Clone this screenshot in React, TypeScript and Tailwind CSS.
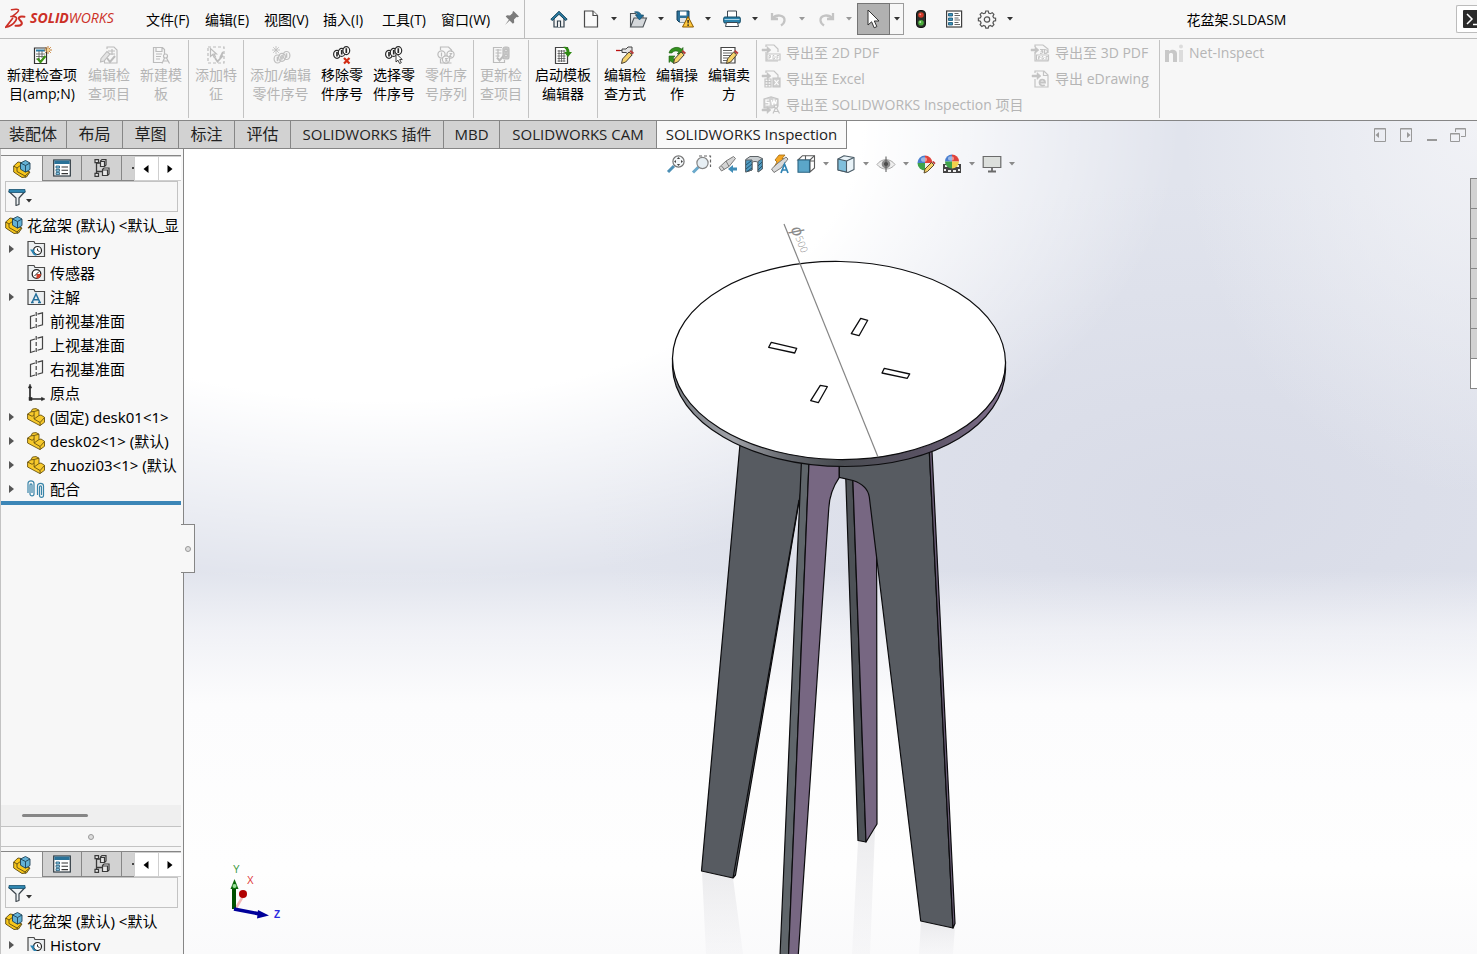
import React from 'react';
import clsx from 'clsx';

const icons: Record<string, React.ReactNode> = {
  home: (
    <g stroke="#2f3e4a" strokeWidth="1.2" fill="none">
      <path d="M4 8v9h10V8" fill="#f4f4f4" />
      <path d="M7.5 17v-6h3v6" fill="#fff" />
      <path d="M.8 9.3 9 1.3l8.2 8-1.6 1.1L9 4.3l-6.600 6.100z" fill="#2b7da3" stroke="#14435c" strokeWidth="1" />
    </g>
  ),
  newDoc: (
    <g fill="#fafafa" stroke="#4a4a4a" strokeWidth="1.2">
      <path d="M2.500 1h8.500l4.500 4.500V17h-13z" />
      <path d="M11 1v4.500h4.500" />
    </g>
  ),
  open: (
    <g stroke="#4c5257" strokeWidth="1.1">
      <path d="M1.500 17V3.500h5l1.500 2h6V8" fill="#e4e6e8" />
      <path d="M1.500 17 5 8h12.500L14 17z" fill="#d5d8db" />
      <path d="M5.500 2c3.500-1 6 .5 6.500 3h2.500l-4 5-4-5h2.300C8.500 3.500 7.500 2.600 5.500 2z" fill="#1f6f9c" stroke="#14506f" strokeWidth=".7" />
    </g>
  ),
  save: (
    <g>
      <path d="M1 1h12v11H3l-2-2z" fill="#2c7199" stroke="#123f5a" />
      <path d="M4 1.500h6.500v4H4z" fill="#fff" />
      <path d="M4 8h6v4H4z" fill="#e4e4e4" />
      <path d="m12 6.500 5.500 10.500h-11z" fill="#ffc83d" stroke="#8a5a00" strokeLinejoin="round" />
      <path d="M11.300 10h1.600l-.3 3.500h-1z" fill="#222" />
      <circle cx="12.100" cy="15.100" r=".9" fill="#222" />
    </g>
  ),
  print: (
    <g stroke="#3b4650">
      <path d="M4.500 7V1h9v6" fill="#fff" />
      <rect x=".7" y="7" width="16.600" height="6" rx="1.200" fill="#2b82ab" stroke="#154b66" />
      <path d="M1.500 9.500h15" stroke="#a6d3e8" />
      <path d="M3.500 12.500h11l1 4h-13z" fill="#fff" />
    </g>
  ),
  undo: <path d="M2 3v6h6M2.500 8.500C6 4 15 4.500 14.500 10.500c-.2 2.500-2 4-3.500 5" fill="none" stroke="#c4c4c4" strokeWidth="2.300" />,
  redo: <path d="M16 3v6h-6M15.500 8.500C12 4 3 4.500 3.500 10.500c.2 2.500 2 4 3.500 5" fill="none" stroke="#c4c4c4" strokeWidth="2.300" />,
  cursor: <path d="M3 0v15l3.600-3.200 2.600 6 2.700-1.200-2.600-5.600H14z" fill="#fff" stroke="#333" strokeWidth="1" />,
  traffic: (
    <g>
      <rect x="4.500" y=".5" width="9" height="17" rx="3.500" fill="#2a2f2a" stroke="#111" />
      <circle cx="9" cy="5" r="2.800" fill="#d23a2a" />
      <circle cx="9" cy="12.700" r="2.800" fill="#4cae3c" />
      <circle cx="8.300" cy="4.300" r=".9" fill="#f2a197" />
      <circle cx="8.300" cy="12" r=".9" fill="#c3efb7" />
    </g>
  ),
  options: (
    <g>
      <rect x="1.600" y="1" width="15" height="16" fill="#fff" stroke="#3f3f3f" strokeWidth="1.200" />
      <path d="M3.500 3.500h4v2.500h-4zM3.500 8h4v2.500h-4zM3.500 12.500h4V15h-4z" fill="#3c93bd" stroke="#15506e" strokeWidth=".8" />
      <path d="M9.500 3.500h4M9.500 5.500h5.500M9.500 8h4M9.500 10h5.500M9.500 12.500h4M9.500 14.500h5.500" stroke="#555" strokeWidth=".9" />
    </g>
  ),
  gear: (
    <g fill="none" stroke="#555">
      <path d="m7.800 1 2.400 0 .5 2 1.700.7 1.800-1 1.700 1.700-1 1.800.7 1.600 2 .5v2.400l-2 .5-.7 1.700 1 1.800-1.700 1.700-1.800-1-1.700.7-.5 2H7.800l-.5-2-1.700-.7-1.800 1-1.700-1.700 1-1.800-.7-1.700-2-.5V8.300l2-.5.7-1.600-1-1.800 1.700-1.700 1.800 1L7.300 3z" strokeWidth="1.200" />
      <circle cx="9" cy="9.500" r="2.700" strokeWidth="1.200" />
    </g>
  ),
  newInspect: (
    <g>
      <path d="M1.500 2h12v15.500h-12z" fill="#fff" stroke="#333" strokeWidth="1.200" />
      <path d="M3 3.500h9v2H3z" fill="#2a7ca5" />
      <path d="M3 8h9M3 10.500h9M3 13h4M6 5v9M9 5v7" stroke="#555" strokeWidth=".8" />
      <path d="m4.500 12.500 3 3.500 5-6" fill="none" stroke="#3c9216" strokeWidth="2.200" />
      <path d="M15 0v8M11 4h8M12.200 1.200l5.600 5.600M17.800 1.200l-5.600 5.600" stroke="#c07422" strokeWidth=".9" />
      <circle cx="15" cy="4" r="1.500" fill="#f7d28b" />
    </g>
  ),
  editInspect: (
    <g fill="none" stroke="#bcbcbc" strokeWidth="1.100">
      <path d="M7 3V1h7l3 3v13H4.500v-3" />
      <path d="M8 5h7M10 8h5M12 3v6" />
      <path d="m7 12 3 4 5-6" strokeWidth="2" />
      <path d="M1 12.500 7 5.500l3 2.500-6 7-3.500 1z" fill="#e4e4e4" />
    </g>
  ),
  template: (
    <g fill="none" stroke="#bcbcbc" strokeWidth="1.200">
      <path d="M10 16.500H1.500V1.500h9l2 2v5M4 1.500v4h6v-4M4 8h6M4 10.500h5M4 13h4" />
      <circle cx="13.500" cy="10" r="2" />
      <path d="M12.500 12 10 17.500M14.500 12l3 5.500M11.500 15h4.500" />
    </g>
  ),
  feature: (
    <g fill="none" stroke="#bcbcbc" strokeWidth="1.200">
      <rect x="1" y="1" width="16" height="16" strokeDasharray="3 2" />
      <path d="M3.500 2.500v8l2.200-2 1.500 3 1.300-.6L7 8h2.500z" fill="#f7f7f7" />
      <path d="m8 12 2.500 3.500L16 9.500M13 12l3-6" strokeWidth="1.800" />
    </g>
  ),
  addBalloon: (
    <g fill="none" stroke="#c0c0c0" strokeWidth="1.200">
      <path d="M4 0v8M0 4h8M1.200 1.200l5.600 5.600M6.800 1.200 1.200 6.800" strokeWidth=".9" />
      <ellipse cx="5.500" cy="13" rx="3.400" ry="4" />
      <ellipse cx="10" cy="11.300" rx="3.400" ry="4" />
      <ellipse cx="14.500" cy="9.500" rx="3.400" ry="4" />
      <path d="M5.500 10.800v4.400M10 9v4.400M14.500 7.300v4.400" strokeWidth="1.600" />
    </g>
  ),
  removeBalloon: (
    <g fill="#fff" stroke="#2a2a2a" strokeWidth="1.200">
      <ellipse cx="4" cy="8.300" rx="3.400" ry="4" />
      <ellipse cx="8.700" cy="6.400" rx="3.400" ry="4" />
      <ellipse cx="13.300" cy="4.600" rx="3.400" ry="4" />
      <path d="M4 6v4.600M8.700 4v4.600M13.300 2.300v4.600" strokeWidth="1.700" />
      <path d="m11 12 5.500 5.500M16.500 12 11 17.500" stroke="#d22b12" strokeWidth="2.200" />
    </g>
  ),
  selectBalloon: (
    <g fill="#fff" stroke="#2a2a2a" strokeWidth="1.200">
      <ellipse cx="4" cy="8.300" rx="3.400" ry="4" />
      <ellipse cx="8.700" cy="6.400" rx="3.400" ry="4" />
      <ellipse cx="13.300" cy="4.600" rx="3.400" ry="4" />
      <path d="M4 6v4.600M8.700 4v4.600M13.300 2.300v4.600" strokeWidth="1.700" />
      <path d="M11 7.500V16l2-1.800 1.600 3.300 1.700-.8-1.600-3.200h2.600z" strokeWidth=".9" />
    </g>
  ),
  balloonList: (
    <g fill="none" stroke="#bcbcbc" strokeWidth="1.200">
      <path d="M3.500 4V1h8l3 3v2M3.500 13v4h11" />
      <circle cx="4.500" cy="8.500" r="3.600" />
      <circle cx="13.500" cy="8.500" r="3.600" />
      <circle cx="9" cy="13.500" r="3.600" fill="#f7f7f7" />
      <path d="M4.500 6.500v4M12.500 7.500h2l-2 3h2M8 12.500h2l-1 1 1 1.500H8" />
    </g>
  ),
  update: (
    <g fill="none" stroke="#bcbcbc" strokeWidth="1.200">
      <path d="M10 1.500H1.500v15h11V14M3.500 4h6M3.500 7h6M3.500 10h4M6 3v8" />
      <path d="m5 11.500 2.500 3 4-4.500" strokeWidth="2" />
      <rect x="11" y="1" width="6" height="12" rx="2" fill="#c9c9c9" />
      <circle cx="14" cy="4.500" r="1.300" fill="#f2f2f2" />
      <circle cx="14" cy="9.500" r="1.300" fill="#f2f2f2" />
    </g>
  ),
  launch: (
    <g>
      <path d="M1.500 1.500h12v16h-12z" fill="#fff" stroke="#444" strokeWidth="1.200" />
      <path d="M3.500 5h8M3.500 7.500h8M3.500 10h8M3.500 12.500h8M3.500 15h8M5 4v12M7.500 4v12M10 4v12" stroke="#555" strokeWidth=".8" />
      <path d="M9 1c4-1 6.500 1 6.500 5h2.500l-4 5-4-5h2.500c0-2-1-3.500-3.500-5z" fill="#2f8a12" />
    </g>
  ),
  method: (
    <g>
      <path d="M0 4.500h6M6 3h4l2-2h4v7h-4l-2-1.500H6z" fill="#e3e3e3" stroke="#444" />
      <path d="M0 4.500h4" stroke="#b11" strokeWidth="1.300" />
      <path d="m5.500 17.500 1-4.500L13 6l3.200 2.800-6.500 7.200z" fill="#f6d36b" stroke="#4b4030" />
      <path d="m13.500 5.500 1.300-1.500 3.200 2.800-1.300 1.500z" fill="#b93a3a" />
    </g>
  ),
  operation: (
    <g>
      <path d="M1 7c1-5 8-7.500 12.500-4L15 1.500V8H9l2-2C8 4 5.500 5 4 7zM1 10h6l-2 2.300c1 .8 1.500 1 2.500 1.200L6 17c-1.500-.2-2.500-1-3.300-2L1 16.500z" fill="#348f20" stroke="#1f5f12" strokeWidth=".6" />
      <path d="m5.500 17.500 1-4.500L13 6l3.200 2.800-6.500 7.200z" fill="#f6d36b" stroke="#4b4030" />
      <path d="m13.500 5.500 1.300-1.500 3.200 2.800-1.300 1.500z" fill="#b93a3a" />
    </g>
  ),
  vendor: (
    <g>
      <path d="M1 1.500h14v15.500H1z" fill="#fff" stroke="#444" strokeWidth="1.200" />
      <path d="M3 4.500h9M3 7h9M3 9.500h7M3 12h5M3 14.500h4" stroke="#555" strokeWidth=".9" />
      <path d="m6.500 17.500 1-4.500 6-7 3.200 2.800-6 7.200z" fill="#f6d36b" stroke="#4b4030" />
      <path d="m14 5.500 1.300-1.500 3.200 2.800-1.300 1.500z" fill="#b93a3a" />
    </g>
  ),
  exportPdf: (
    <g fill="none" stroke="#c4c4c4" strokeWidth="1.200">
      <path d="M4 3V1h8l4 4v3M4 8v9h12" />
      <path d="M0 5h5V2.500L9 6 5 9.500V7H0z" fill="#c4c4c4" strokeWidth=".5" />
      <path d="M5 10h13v6H5z" fill="#fff" />
      <path d="M7 15v-3.500h1.500v2H7M11 15v-3.500h1l1 1v1.500l-1 1zM15 15v-3.500h2M15 13.200h1.500" strokeWidth=".9" />
    </g>
  ),
  exportPdf3d: (
    <g fill="none" stroke="#c4c4c4" strokeWidth="1.200">
      <path d="M4 3V1h8l5 4v4M4 8v9h13v-1" />
      <path d="M0 5h4V2.500L8 6 4 9.500V7H0z" fill="#c4c4c4" strokeWidth=".5" />
      <path d="M9 5.500h3L10.500 7.200c2 0 2 2.300-1.500 2.100M13.500 5.500v4c4 0 4-4 0-4z" />
      <path d="M5.500 11h12v5h-12z" fill="#fff" />
      <path d="M7.500 15.500v-3H9v1.500H7.500M11 15v-2.500h1l1 1v.5l-1 1zM15 15.500v-3h2M15 14h1.500" strokeWidth=".9" />
    </g>
  ),
  exportExcel: (
    <g fill="none" stroke="#c4c4c4" strokeWidth="1.200">
      <path d="M4 3V1h8l4 4v3M3 9h6v8H3zM3 11.600h6M3 14.300h6M6 9v8" />
      <path d="M0 5h5V2.500L9 6 5 9.500V7H0z" fill="#c4c4c4" strokeWidth=".5" />
      <path d="M11 8h7v9h-7z" fill="#d0d0d0" />
      <path d="m12.500 10 4 5M16.500 10l-4 5" stroke="#fff" />
    </g>
  ),
  exportProject: (
    <g fill="none" stroke="#c4c4c4" strokeWidth="1.200">
      <path d="M2 3 9 .8 16 3v7l-6 2H2z" fill="#d2d2d2" />
      <path d="M7 4H4v2.500h3V9H3.500M9.500 4l1 5 1.500-5 1.500 5 1-5" stroke="#fff" />
      <path d="M0 13h5v-2.500l4 3.500-4 3.500V15H0z" fill="#c4c4c4" strokeWidth=".5" />
      <circle cx="14" cy="10.500" r="1.600" fill="#f7f7f7" />
      <path d="m13.500 12-2.500 5.500M14.500 12l3 5.500M12 15.500h4" />
    </g>
  ),
  exportDrawing: (
    <g fill="none" stroke="#c4c4c4" strokeWidth="1.200">
      <path d="M4 3V1h9l4 4v12H4V9M12.500 1v4.500H17" />
      <path d="M1 5h5V2.500L10 6 6 9.500V7H1z" fill="#c4c4c4" strokeWidth=".5" />
      <path d="M8 12.500h6c0-4-5.500-4-5.500.3 0 3 3.500 3.500 5.200 2" strokeWidth="1.800" />
    </g>
  ),
  netInspect: (
    <g fill="#c8c8c8">
      <path d="M0 6h4v1.200C6 5 12 5 12 9.500V18H8v-7.500c0-2-4-2-4 0V18H0z" />
      <path d="M14 6h4v12h-4z" fill="#dcdcdc" />
      <circle cx="16" cy="2.500" r="2" fill="#dcdcdc" />
    </g>
  ),
  assembly: (
    <g stroke="#5a4a12" strokeWidth=".9" strokeLinejoin="round">
      <path d="M.7 6 5 2l3 .5V9l9 3-3.500 5L9 17.500.7 12z" fill="#f7c61c" />
      <path d="M.7 6 4 8v3.500l8 4.500.5 1.500M4 8l4-3M12 16l4.500-4" fill="none" />
      <path d="m7.500 3 5-2.500L17 3v6.500l-4.500 2.700-5-3z" fill="#63b1d6" stroke="#1d4257" />
      <path d="m7.500 3 5 2.500L17 3M12.500 5.500V12" fill="none" stroke="#1d4257" />
    </g>
  ),
  property: (
    <g>
      <rect x=".7" y="1" width="16.600" height="16" fill="#fff" stroke="#2f3a42" strokeWidth="1.200" />
      <path d="M1.300 1.500h15.400V5H1.300z" fill="#2a7298" />
      <path d="M3 7h3.500v2H3zM3 10.300h3.500v2H3zM3 13.600h3.500v2H3z" fill="#8fd0ee" stroke="#1d5673" strokeWidth=".8" />
      <path d="M8.500 8H15M8.500 11.300H15M8.500 14.600H15" stroke="#333" strokeWidth="1.100" />
    </g>
  ),
  config: (
    <g fill="#e8e8e8" stroke="#3a3a3a" strokeWidth="1.200">
      <path d="M3.500 2v14M3.500 4H8M3.500 12.500H9" fill="none" strokeWidth="1.300" />
      <path d="M2 .6h3.500v3H2zM2 14.400h3.500v3H2z" />
      <path d="M7.500 2 9 .6h4V6l-1.500 1.500h-4zM9.500 10.500 11 9h5v6l-1.500 1.500h-5z" />
      <path d="M7.500 2.500h4v5M9.500 11h5v5.500" fill="none" />
    </g>
  ),
  filter: (
    <g stroke="#3b444b" strokeLinejoin="round">
      <path d="M1 3.500h16L11 10v6.500l-3 1V10z" fill="#eef2f4" strokeWidth="1.200" />
      <path d="M1 1.500h16v3H1z" fill="#2f86b0" stroke="#175170" strokeWidth=".8" />
    </g>
  ),
  history: (
    <g>
      <path d="M1 16.500V1.500h6l1 2h9.500v13z" fill="#eceff1" stroke="#4a4a4a" strokeWidth="1.200" />
      <circle cx="10.500" cy="10.500" r="4" fill="#fff" stroke="#222" strokeWidth="1.200" />
      <path d="M10.500 8.500v2l2 1" fill="none" stroke="#222" />
      <path d="M3 9.500h5L5.500 13z" fill="#2b84b3" />
      <path d="M5.500 11c.5 2.500 2 3.700 4 4" fill="none" stroke="#2b84b3" strokeWidth="1.500" />
    </g>
  ),
  sensor: (
    <g>
      <path d="M1 16.500V1.500h6l1 2h9.500v13z" fill="#eceff1" stroke="#4a4a4a" strokeWidth="1.200" />
      <circle cx="9.500" cy="10" r="4.300" fill="#fff" stroke="#222" strokeWidth="1.300" />
      <path d="M9.500 10H14a4.500 4.500 0 0 1-4.500 4.500z" fill="#d1402a" />
      <path d="m7.500 12 4.500-4.500" stroke="#222" />
    </g>
  ),
  annotation: (
    <g>
      <path d="M1 16.500V1.500h6l1 2h9.500v13z" fill="#eceff1" stroke="#4a4a4a" strokeWidth="1.200" />
      <path d="M5 14.500 9 6l4 8.500M6.500 11.800h5M4 14.600h2.700M11 14.600h3" fill="none" stroke="#236f9c" strokeWidth="1.500" />
    </g>
  ),
  plane: (
    <g fill="none" stroke="#444" strokeWidth="1.200">
      <path d="M8 3 3.500 4.500v12L8 15M10.500 2.200 15.500.8v12l-5 1.500" />
      <path d="M9.200 0v18" strokeDasharray="4 2" />
    </g>
  ),
  origin: (
    <g stroke="#2a2a2a" strokeWidth="1.700" fill="#2a2a2a">
      <path d="M3 2v13h13" fill="none" />
      <path d="M3 0 1.300 4h3.400zM18 15l-3.500-1.700v3.400z" strokeWidth=".5" />
      <rect x="2" y="13.500" width="3" height="3" strokeWidth=".5" />
    </g>
  ),
  part: (
    <g stroke="#6a5310" strokeWidth=".9" strokeLinejoin="round">
      <path d="M.6 6 4 3.800 5.500 1 9 .6l3 1.600v5.300L14 7l3.500 2.300v5L13 17.600.6 11z" fill="#f7c92b" />
      <path d="m.6 6 4.500 2.300 2-1.500V3.500L4 3.800M7.100 3.500 12 2.200M7.100 6.800V11l6 3.500v3M13.100 14.500l4.400-5M7.100 11 12 7.500" fill="none" />
    </g>
  ),
  mates: (
    <g fill="none" stroke="#3984a8" strokeWidth="1.200">
      <path d="M1 13V3.500c0-3.500 6-3.500 6 0V14c0 2.500-4 2.500-4 0V5c0-1.500 2-1.500 2 0v8" />
      <path d="M10.500 15V6c0-3.500 6-3.500 6 0v9.500c0 2.500-4 2.500-4 0V7c0-1.500 2-1.500 2 0v8" />
    </g>
  ),
  zoomFit: (
    <g>
      <path d="m1 17 6-6" stroke="#4c8fb5" strokeWidth="3" />
      <circle cx="11.500" cy="6.500" r="5.600" fill="#f3f6f8" stroke="#757575" strokeWidth="1.200" />
      <path d="m11.500 2 1.600 2h-3.200zM11.500 11l1.600-2h-3.200zM7 6.500l2-1.600v3.200zM16 6.500l-2-1.600v3.200z" fill="#444" />
    </g>
  ),
  zoomArea: (
    <g>
      <path d="M6 1h11.500v11" fill="none" stroke="#666" strokeWidth="1.200" strokeDasharray="3 2" />
      <path d="m0 17.500 5.500-5.500" stroke="#6aa9cb" strokeWidth="3" />
      <circle cx="9.500" cy="8" r="5.600" fill="#e7eff4" stroke="#858585" strokeWidth="1.200" />
    </g>
  ),
  prevView: (
    <g>
      <path d="m0 12.500 2.500 3.500L10 11.500l6.500-8L14.500 1.500 7 6z" fill="#d4d4d4" stroke="#7a7a7a" />
      <path d="m7 6 3 5.500M2.500 11l3 3.500" stroke="#7a7a7a" />
      <path d="M18 12.500h-4V10l-5 4 5 4v-2.500h4z" fill="#3f8cb6" />
    </g>
  ),
  section: (
    <g stroke="#5d6367">
      <path d="M.7 4.500 5 1.500h8l4.300 2V14L13 17V8c0-2-6-2-6 0v7l-6.300 2z" fill="#c9ced1" />
      <path d="M.7 5H7v10l-6.300 2zM13 6.500l4.300-3V14L13 17z" fill="#4f9cc4" />
      <path d="m1 10 5-4M1 14l6-5M2 16.500 7 13M13 11l4-4M13 15l4-4" stroke="#22536e" />
    </g>
  ),
  dynamic: (
    <g>
      <path d="m4 5 4-5h6l-3 3.500h3L3 12l3-5z" fill="#f5a623" stroke="#a06a12" strokeWidth=".8" />
      <path d="m.5 14 2.500 3.500 7-4.500 7-9-2-2-8 6z" fill="#d9d9d9" stroke="#7a7a7a" />
      <path d="m10 18 3.500-9L17 18M11 15h5" fill="none" stroke="#2f83b3" strokeWidth="1.700" />
    </g>
  ),
  orient: (
    <g stroke="#5b5b5b" strokeWidth="1.100">
      <path d="m1 5 4.500-4.300H17.500V13L13 17V5z" fill="#fff" />
      <path d="M8.500.7v12.600M5.500 6h12M13 5l4.500-4.300" fill="none" />
      <path d="M1 5h11.500v12.300H1z" fill="#5ba6c9" stroke="#2d6482" />
    </g>
  ),
  display: (
    <g stroke="#4a5b66" strokeWidth="1.100" strokeLinejoin="round">
      <path d="M1 4 7 .8 17 2.500v12l-6 3L1 15z" fill="#e9f3f8" />
      <path d="M1 4 9.500 6v11L1 15z" fill="#7fbfdc" />
      <path d="M9.500 6 17 2.500" />
    </g>
  ),
  eye: (
    <g>
      <path d="M0 9.500C4.500 3 13.500 3 18 9.500 13.500 15.500 4.500 15.500 0 9.500z" fill="#eee" stroke="#aaa" />
      <circle cx="9" cy="9" r="4.300" fill="#8b8b8b" />
      <circle cx="9" cy="9" r="2" fill="#444" />
      <path d="M9 1.500v15.500" stroke="#555" />
    </g>
  ),
  appearance: (
    <g>
      <path d="M8 8V.5A7.500 7.500 0 0 0 .5 8z" fill="#4a7fd0" />
      <path d="M8 8V.5A7.500 7.500 0 0 1 15.500 8z" fill="#e0433c" />
      <path d="M8 8H.5A7.500 7.500 0 0 0 8 15.500z" fill="#3fa34a" />
      <path d="M8 8h7.500A7.500 7.500 0 0 1 8 15.500z" fill="#f0f0f0" />
      <ellipse cx="7" cy="4.500" rx="3" ry="2.300" fill="#fff" opacity=".45" />
      <path d="m7 18 1-4 6.500-6.500L17 10l-6.500 6.500z" fill="#f4d06a" stroke="#5a4a2a" />
      <path d="m15 7 1.500-1 2 2-1 1.500z" fill="#b93a3a" />
    </g>
  ),
  scene: (
    <g>
      <path d="M0 9h18v9H0z" fill="#444" />
      <path d="M2 10h3v2H2zM13 10h3v2h-3zM5 15h3v2H5zM10 15h3v2h-3zM1 14h2v2H1zM15 14h2v2h-2z" fill="#eee" />
      <path d="M9 6.500V-.500A7 7 0 0 0 2 6.500z" fill="#4a7fd0" />
      <path d="M9 6.500V-.500a7 7 0 0 1 7 7z" fill="#e0433c" />
      <path d="M9 6.500H2a7 7 0 0 0 7 7z" fill="#3fa34a" />
      <path d="M9 6.500h7a7 7 0 0 1-7 7z" fill="#f1d14c" />
      <ellipse cx="8" cy="3.500" rx="3" ry="2.200" fill="#fff" opacity=".45" />
    </g>
  ),
  monitor: (
    <g stroke="#6a6a6a" strokeWidth="1.200">
      <path d="M.2 1.500h17.600v11H.2z" fill="#dcdfdc" />
      <path d="M9 12.500V16M5 16.500h8" strokeWidth="1.800" />
    </g>
  ),
};

const Icon: React.FC<{ name: string; className?: string }> = ({ name, className }) => (
  <svg viewBox="0 0 18 18" className={clsx('shrink-0 overflow-visible', className ?? 'h-[18px] w-[18px]')} aria-hidden="true">
    {icons[name]}
  </svg>
);

const Caret: React.FC<{ className?: string }> = ({ className }) => (
  <svg viewBox="0 0 6 4" className={clsx('h-1 w-1.5', className)} aria-hidden="true">
    <path d="M0 0h6L3 3.500z" fill="currentColor" />
  </svg>
);

const menus = ['文件(F)', '编辑(E)', '视图(V)', '插入(I)', '工具(T)', '窗口(W)'];

const quickTools = [
  { icon: 'newDoc', label: '新建' },
  { icon: 'open', label: '打开' },
  { icon: 'save', label: '保存' },
  { icon: 'print', label: '打印' },
  { icon: 'undo', label: '撤消', disabled: true },
  { icon: 'redo', label: '重做', disabled: true },
];

const TitleBar: React.FC = () => (
  <header className="flex h-[39px] shrink-0 items-center border-b border-[#bdbdbd]">
    <div className="flex w-[140px] items-center pb-0.5 pl-[5px]">
      <svg viewBox="0 0 21 21" className="h-[21px] w-[21px]" fill="none" stroke="#cc2f26" strokeLinecap="round" aria-hidden="true">
        <path d="M6.500 1.800C10 .8 14 .8 13.500 2.800 13 4.500 10 6 8 7.800" strokeWidth="1.500" />
        <path d="M6 8.500c4.500-.8 7 1 4.500 4.500C8.500 16 4.500 18.500.8 19.200L7.500 10.500" strokeWidth="1.700" />
        <path d="M19.500 8.800c-5.500-1-7 1-4.500 3.400 3.500 3.200 2 6-4.500 5.600" strokeWidth="2" />
      </svg>
      <span className="ml-1 font-['Open_Sans'] text-sm leading-5 text-[#cc2f26] italic">
        <b>SOLID</b>
        <span>WORKS</span>
      </span>
    </div>
    <nav className="flex items-center pt-0.5 pl-1.5 text-sm">
      {menus.map((menu) => (
        <button key={menu} className="w-[59px] text-left whitespace-nowrap">{menu}</button>
      ))}
      <button aria-label="固定菜单" className="flex w-[24px] justify-end pr-1 pb-1">
        <svg viewBox="0 0 16 16" className="h-4 w-4" aria-hidden="true">
          <path d="m9.500 1 5.500 5.500-1.500.7-1-.3-2.500 2.600.2 3-1.300 1.200-3.300-3.300L1 15l3.900-5.300L1.700 6.500 3 5.300l3 .2L8.700 3l-.3-1z" fill="#7b7b7b" />
        </svg>
      </button>
    </nav>
    <div className="flex h-full items-center border-l border-[#bdbdbd] pl-[18px] text-[#333]">
      <div className="flex items-center gap-0.5">
        <button aria-label="主页" className="flex w-8 justify-center"><Icon name="home" /></button>
        {quickTools.map((tool) => (
          <div key={tool.icon} className={clsx('flex items-center', tool.disabled && 'text-[#999]')}>
            <button aria-label={tool.label} disabled={tool.disabled} className="flex w-7 justify-center"><Icon name={tool.icon} /></button>
            <button aria-label={`${tool.label}选项`} className="flex h-5 w-[17px] items-center justify-center"><Caret /></button>
          </div>
        ))}
      </div>
      <button aria-label="选择" className="flex h-8 w-[33px] items-center justify-center border border-[#757575] bg-[#b1b1b1]"><Icon name="cursor" /></button>
      <button aria-label="选择选项" className="flex h-8 w-3.5 items-center justify-center border border-l-0 border-[#9b9b9b]"><Caret /></button>
      <button aria-label="重建模型" className="flex w-[33px] justify-center"><Icon name="traffic" /></button>
      <button aria-label="文件属性" className="flex w-[33px] justify-center"><Icon name="options" /></button>
      <button aria-label="选项" className="flex w-[33px] justify-center"><Icon name="gear" /></button>
      <button aria-label="更多选项" className="flex h-5 w-3.5 items-center justify-center"><Caret /></button>
    </div>
    <h1 className="flex-1 pt-0.5 text-center text-sm whitespace-nowrap">花盆架.SLDASM</h1>
    <button aria-label="搜索命令" className="flex h-7 w-[21px] items-center overflow-hidden rounded-l-xs border border-r-0 border-[#bcbcbc] bg-white pl-1.5">
      <svg viewBox="0 0 18 18" className="h-[18px] w-[18px] shrink-0" aria-hidden="true">
        <rect width="18" height="18" rx="1" fill="#2b2b2b" />
        <path d="m4 4 5 5-5 5M10 14.500h7" fill="none" stroke="#fff" strokeWidth="1.500" />
      </svg>
    </button>
  </header>
);

interface Command {
  icon: string;
  lines: string[];
  width: string;
  disabled?: boolean;
}

const commandGroups: Command[][] = [
  [
    { icon: 'newInspect', lines: ['新建检查项', '目(amp;N)'], width: 'w-[82px]' },
    { icon: 'editInspect', lines: ['编辑检', '查项目'], width: 'w-[52px]', disabled: true },
    { icon: 'template', lines: ['新建模', '板'], width: 'w-[52px]', disabled: true },
  ],
  [{ icon: 'feature', lines: ['添加特', '征'], width: 'w-[52px]', disabled: true }],
  [
    { icon: 'addBalloon', lines: ['添加/编辑', '零件序号'], width: 'w-[71px]', disabled: true },
    { icon: 'removeBalloon', lines: ['移除零', '件序号'], width: 'w-[52px]' },
    { icon: 'selectBalloon', lines: ['选择零', '件序号'], width: 'w-[52px]' },
    { icon: 'balloonList', lines: ['零件序', '号序列'], width: 'w-[52px]', disabled: true },
  ],
  [{ icon: 'update', lines: ['更新检', '查项目'], width: 'w-[52px]', disabled: true }],
  [{ icon: 'launch', lines: ['启动模板', '编辑器'], width: 'w-[66px]' }],
  [
    { icon: 'method', lines: ['编辑检', '查方式'], width: 'w-[52px]' },
    { icon: 'operation', lines: ['编辑操', '作'], width: 'w-[52px]' },
    { icon: 'vendor', lines: ['编辑卖', '方'], width: 'w-[52px]' },
  ],
];

const exportGroups = [
  {
    width: 'w-[269px]',
    items: [
      { icon: 'exportPdf', label: '导出至 2D PDF' },
      { icon: 'exportExcel', label: '导出至 Excel' },
      { icon: 'exportProject', label: '导出至 SOLIDWORKS Inspection 项目' },
    ],
  },
  {
    width: 'w-[134px] border-r',
    items: [
      { icon: 'exportPdf3d', label: '导出至 3D PDF' },
      { icon: 'exportDrawing', label: '导出 eDrawing' },
    ],
  },
  { width: 'w-[120px]', items: [{ icon: 'netInspect', label: 'Net-Inspect' }] },
];

const Ribbon: React.FC = () => (
  <div className="flex h-[82px] shrink-0 items-start border-b border-[#868686] pt-px text-sm">
    {commandGroups.map((group, index) => (
      <div key={index} className="flex h-[78px] shrink-0 border-r border-[#c3c3c3] px-px">
        {group.map((command) => (
          <button
            key={command.icon}
            disabled={command.disabled}
            className={clsx('flex flex-col items-center pt-1.5 leading-[19px] whitespace-nowrap', command.width, command.disabled && 'text-[#b5b5b5]')}
          >
            <Icon name={command.icon} />
            <span className="mt-px">{command.lines[0]}</span>
            <span>{command.lines[1]}</span>
          </button>
        ))}
      </div>
    ))}
    {exportGroups.map((group) => (
      <div key={group.width} className={clsx('flex h-[78px] shrink-0 flex-col border-[#c3c3c3] pl-[5px]', group.width)}>
        {group.items.map((item) => (
          <button key={item.label} disabled className="flex h-[26px] items-center gap-1.5 whitespace-nowrap text-[#b5b5b5]">
            <Icon name={item.icon} />
            {item.label}
          </button>
        ))}
      </div>
    ))}
  </div>
);

const ribbonTabs = [
  { label: '装配体', width: 'w-[67px]' },
  { label: '布局', width: 'w-[56px]' },
  { label: '草图', width: 'w-[56px]' },
  { label: '标注', width: 'w-[56px]' },
  { label: '评估', width: 'w-[56px]' },
  { label: 'SOLIDWORKS 插件', width: 'w-[153px]' },
  { label: 'MBD', width: 'w-[56px]' },
  { label: 'SOLIDWORKS CAM', width: 'w-[157px]' },
  { label: 'SOLIDWORKS Inspection', width: 'w-[190px]', active: true },
];

const RibbonTabs: React.FC = () => (
  <div className="flex h-7 shrink-0 items-center justify-between">
    <div role="tablist" className="flex h-full">
      {ribbonTabs.map((tab) => (
        <button
          key={tab.label}
          role="tab"
          aria-selected={!!tab.active}
          className={clsx(
            'border-r border-b border-[#868686] pb-0.5 text-base leading-6 whitespace-nowrap text-[#222]',
            tab.width,
            tab.active ? 'bg-[#f9f9f9]' : 'bg-[#d2d2d2]',
          )}
        >
          <span className={clsx(/[A-Z]/.test(tab.label) && 'text-[15px]')}>{tab.label}</span>
        </button>
      ))}
    </div>
    <div className="flex items-center gap-2.5 pr-[11px] text-[#999]">
      <button aria-label="向左平铺">
        <svg viewBox="0 0 16 14" className="h-3.5 w-4" fill="none" stroke="currentColor"><path d="M2.500 .5h11v13h-11zM2.500 1h11" /><path d="M3.500 7 7 4v6z" fill="currentColor" stroke="none" /></svg>
      </button>
      <button aria-label="向右平铺">
        <svg viewBox="0 0 16 14" className="h-3.5 w-4" fill="none" stroke="currentColor"><path d="M2.500 .5h11v13h-11zM2.500 1h11" /><path d="M12.500 7 9 4v6z" fill="currentColor" stroke="none" /></svg>
      </button>
      <button aria-label="最小化">
        <svg viewBox="0 0 16 14" className="h-3.5 w-4" stroke="currentColor"><path d="M3 12h10" strokeWidth="2" /></svg>
      </button>
      <button aria-label="还原">
        <svg viewBox="0 0 16 14" className="h-3.5 w-4" fill="none" stroke="currentColor"><path d="M5.500 4V.5h10v8H11M5.500 1h10M.5 5.500h9v8h-9zM.5 6h9" /></svg>
      </button>
    </div>
  </div>
);

const treeItems = [
  { icon: 'history', label: 'History', expandable: true },
  { icon: 'sensor', label: '传感器' },
  { icon: 'annotation', label: '注解', expandable: true },
  { icon: 'plane', label: '前视基准面' },
  { icon: 'plane', label: '上视基准面' },
  { icon: 'plane', label: '右视基准面' },
  { icon: 'origin', label: '原点' },
  { icon: 'part', label: '(固定) desk01<1>', expandable: true },
  { icon: 'part', label: 'desk02<1> (默认)', expandable: true },
  { icon: 'part', label: 'zhuozi03<1> (默认', expandable: true },
  { icon: 'mates', label: '配合', expandable: true },
];

const FeatureTree: React.FC<{ id: string; compact?: boolean }> = ({ id, compact }) => (
  <div className={clsx('flex flex-col overflow-hidden', compact ? 'h-[107px] shrink-0 pt-1' : 'min-h-0 flex-1 pt-1.5')}>
    <div className="flex h-[26px] shrink-0 border-t border-[#868686]">
      <button aria-label="特征管理器" className="flex w-[41px] items-center justify-center"><Icon name="assembly" /></button>
      <button aria-label="属性管理器" className="flex w-10 items-center justify-center border border-t-0 border-[#868686] bg-[#d2d2d2]"><Icon name="property" /></button>
      <button aria-label="配置管理器" className="flex w-10 items-center justify-center border-r border-b border-[#868686] bg-[#d2d2d2]"><Icon name="config" /></button>
      <span className="flex w-3 items-center justify-end border-b border-[#868686] bg-[#d2d2d2]"><i className="h-0.5 w-0.5 bg-[#444]" /></span>
      <button aria-label="上一个" className="flex flex-1 items-center justify-center border border-[#cfcfcf] bg-white">
        <svg viewBox="0 0 5 8" className="h-2 w-1.5"><path d="M5 0v8L0 4z" /></svg>
      </button>
      <button aria-label="下一个" className="flex flex-1 items-center justify-center border-y border-[#cfcfcf] bg-white">
        <svg viewBox="0 0 5 8" className="h-2 w-1.5"><path d="M0 0v8l5-4z" /></svg>
      </button>
    </div>
    <label htmlFor={id} className="mr-[3px] ml-1 flex h-[31px] shrink-0 items-center border border-[#c3c3c3] pl-0.5">
      <Icon name="filter" />
      <Caret className="mt-2 text-[#333]" />
      <input id={id} aria-label="过滤器" className="min-w-0 flex-1 bg-transparent px-1 text-[15px] outline-none" />
    </label>
    <div className={clsx("overflow-hidden pt-px font-['Noto_Sans','Noto_Sans_CJK_SC',sans-serif] text-[15px] leading-6 whitespace-nowrap", compact && 'mr-5 mb-[3px]')}>
      <div className="flex h-6 items-center gap-1 pl-1">
        <Icon name="assembly" />
        <span>花盆架 (默认) &lt;默认{!compact && '_显'}</span>
      </div>
      <ul>
        {(compact ? treeItems.slice(0, 1) : treeItems).map((item) => (
          <li key={item.label} className="flex h-6 items-center pl-2">
            <span className="w-[18px]">
              {item.expandable && <svg viewBox="0 0 5 8" className="h-2 w-[5px]" aria-hidden="true"><path d="M0 0v8l5-4z" fill="#555" /></svg>}
            </span>
            <Icon name={item.icon} />
            <span className="ml-[5px]">{item.label}</span>
          </li>
        ))}
      </ul>
    </div>
    {!compact && (
      <>
        <div className="h-1 shrink-0 bg-[#3c86b7]" />
        <div className="mt-auto flex h-[21px] shrink-0 items-center bg-[#efefef] pl-[21px]">
          <div className="h-[3px] w-[66px] rounded-full bg-[#868686]" />
        </div>
      </>
    )}
  </div>
);

const Sidebar: React.FC = () => (
  <aside className="relative flex w-[184px] shrink-0 flex-col border-r border-l border-r-[#868686] border-l-[#c3c3c3] bg-[#f7f7f7] pr-0.5">
    <FeatureTree id="tree-filter" />
    <div className="flex h-[21px] shrink-0 items-center justify-center border-y border-[#c3c3c3]">
      <i className="h-1.5 w-1.5 rounded-full border border-[#999] bg-[#ddd]" />
    </div>
    <FeatureTree id="tree-filter-lower" compact />
    <button aria-label="折叠面板" className="absolute top-[375px] -right-3 z-10 flex h-[49px] w-3.5 items-center justify-center border border-l-0 border-[#868686] bg-[#f7f7f7]">
      <i className="h-1.5 w-1.5 rounded-full border border-[#999] bg-[#ddd]" />
    </button>
  </aside>
);

const viewTools = [
  { icon: 'zoomFit', label: '整屏显示全图' },
  { icon: 'zoomArea', label: '局部放大' },
  { icon: 'prevView', label: '上一视图' },
  { icon: 'section', label: '剖面视图' },
  { icon: 'dynamic', label: '动态注解视图' },
  { icon: 'orient', label: '视图定向', menu: true },
  { icon: 'display', label: '显示样式', menu: true },
  { icon: 'eye', label: '隐藏项目', menu: true },
  { icon: 'appearance', label: '编辑外观' },
  { icon: 'scene', label: '应用布景', menu: true },
  { icon: 'monitor', label: '视图设定', menu: true },
];

const Model: React.FC = () => (
  <svg viewBox="184 149 1293 805" preserveAspectRatio="xMinYMin slice" className="absolute inset-0 h-full w-full" role="img" aria-label="花盆架模型">
    <defs>
      <linearGradient id="rim" x1="0" x2="1">
        <stop offset="0" stopColor="#777b81" />
        <stop offset=".18" stopColor="#a0a2a8" />
        <stop offset=".35" stopColor="#63666c" />
        <stop offset=".5" stopColor="#484b50" />
        <stop offset=".75" stopColor="#595263" />
        <stop offset="1" stopColor="#82718f" />
      </linearGradient>
      <linearGradient id="reflection" x1="0" x2="0" y1="0" y2="1">
        <stop offset="0" stopColor="#d9d9dd" stopOpacity=".5" />
        <stop offset="1" stopColor="#e6e6ea" stopOpacity=".2" />
      </linearGradient>
    </defs>
    <g fill="url(#reflection)">
      <path d="M702 872 733 878 743 954H706z" />
      <path d="M858 841 875 830 870 954H852z" />
      <path d="M921 922 955 926 953 954H919z" />
    </g>
    <g stroke="#0c0c0e" strokeWidth="1.200" strokeLinejoin="round">
      <path d="M740 444 701.500 871 733 878 735.500 875 800.500 493 803 455z" fill="#575b61" />
      <path d="M733 878 799 500" fill="none" />
      <path d="M845.500 470 858 840.500 866 842 852.500 470z" fill="#4d5156" />
      <path d="M852.500 470 866 842 877 824 876.500 470z" fill="#776782" />
      <path d="M801.700 455 780 956h8.500L809.300 455z" fill="#5f656a" />
      <path d="M809.300 455 788.500 956h9.700L828.800 508C829.500 494 834 485 839.300 477.300V455z" fill="#776782" />
      <path d="M839.300 455v22.300L853 480.500C862 483.500 868 488 869.300 497L920.700 921 953 928 929 445z" fill="#575b61" />
      <path d="M929 445 953 928 955 923.500 931.700 445z" fill="#6a5c76" />
      <path d="M672.500 358v9C674 421 749 466.500 845 466.500 936 466.500 1004 424 1005.500 370v-9z" fill="url(#rim)" />
      <ellipse cx="839" cy="360.500" rx="166.500" ry="99" transform="rotate(1 839 360.500)" fill="#fff" />
      <g fill="#fff" strokeWidth="1.300">
        <path d="m771.300 342.300 25.400 6-2 4.700-26-5.700z" />
        <path d="m860.700 318.300 7 2-8.700 15.400-7.700-2z" />
        <path d="m884.300 368.300 25.400 5.700-2.400 4.300L882 373z" />
        <path d="m820.300 385.300 7 1.400-9 16-7.600-2z" />
      </g>
    </g>
    <path d="M784 224 878 457" stroke="#868686" strokeWidth="1.200" />
    <g transform="rotate(68 790 230)" fill="#8a8a8a" fontFamily="'Open Sans', sans-serif">
      <text x="789" y="229" fontSize="17" fontStyle="italic">ϕ</text>
      <text x="799" y="228" fontSize="10" fontWeight="300">500</text>
    </g>
    {/* orientation triad */}
    <path d="m235 907 8-13 4-3-3 6-7 12z" fill="#f3b8b8" />
    <path d="M234 909v-22" stroke="#005000" strokeWidth="4" />
    <path d="m234.500 879-4 10h8z" fill="#0a6a0a" />
    <circle cx="234.500" cy="886" r="2" fill="#9be29b" />
    <path d="m234 909 26 5" stroke="#00009a" strokeWidth="3.500" />
    <path d="m258 910 11 5.500-12 3z" fill="#00009a" />
    <circle cx="243" cy="894" r="4" fill="#b00000" />
    <g fontFamily="'Liberation Sans', sans-serif" fontSize="10">
      <text x="233" y="873" fill="#3c9a3c">Y</text>
      <text x="247" y="884" fill="#e03a3a">X</text>
      <text x="274" y="918" fill="#2a2ae0" fontWeight="bold">Z</text>
    </g>
  </svg>
);

const Viewport: React.FC = () => (
  <main className="relative min-w-0 flex-1 overflow-hidden">
    <Model />
    <div className="relative flex justify-center pt-[5px] pl-5">
      <div className="flex items-center gap-1.5 text-[#8a8a8a]">
        {viewTools.map((tool) => (
          <React.Fragment key={tool.icon}>
            <button aria-label={tool.label} className="flex w-5 justify-center"><Icon name={tool.icon} /></button>
            {tool.menu && <button aria-label={`${tool.label}选项`} className="flex h-5 w-2 items-center justify-center"><Caret /></button>}
          </React.Fragment>
        ))}
      </div>
    </div>
    <div className="absolute top-[29px] right-0 flex w-[7px] flex-col border-t border-l border-[#868686]">
      {['资源', '设计库', '文件探索器', '视图调色板', '外观', '自定义属性', '论坛'].map((pane, index) => (
        <button key={pane} aria-label={pane} className={clsx('h-[30px] border-b border-[#868686]', index === 6 ? 'bg-white' : 'bg-[#d2d2d2]')} />
      ))}
    </div>
  </main>
);

const App: React.FC = () => {
  return (
    <div className="flex h-screen flex-col overflow-hidden bg-[#f7f7f7] font-['Open_Sans','Noto_Sans_CJK_SC',sans-serif] text-black">
      <TitleBar />
      <Ribbon />
      <div className="flex min-h-0 flex-1 flex-col bg-[linear-gradient(to_bottom,rgba(255,255,255,0)_54%,rgba(250,250,252,0.6)_61%,#fcfcfd_70%,#fefefe_90%,#fafafb_100%),radial-gradient(ellipse_54%_56%_at_26%_0%,#fff_60%,rgba(255,255,255,0)_100%),radial-gradient(ellipse_20%_45%_at_100%_0%,#f1f2f6,rgba(241,242,246,0)),radial-gradient(ellipse_60%_55%_at_82%_46%,#d8dbe7,#e1e4ed_70%)]">
        <RibbonTabs />
        <div className="flex min-h-0 flex-1">
          <Sidebar />
          <Viewport />
        </div>
      </div>
    </div>
  );
};

export default App;
